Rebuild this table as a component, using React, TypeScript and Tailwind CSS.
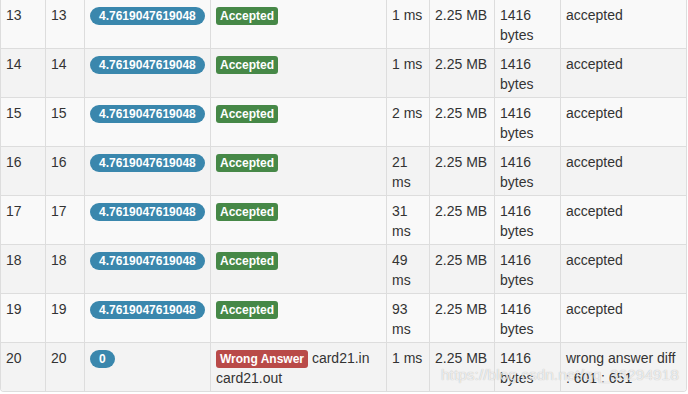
const rows = [
  { n: 13, time: "1 ms" },
  { n: 14, time: "1 ms" },
  { n: 15, time: "2 ms" },
  { n: 16, time: "21 ms" },
  { n: 17, time: "31 ms" },
  { n: 18, time: "49 ms" },
  { n: 19, time: "93 ms" },
]

function Cell({ w, children }: { w: string; children: React.ReactNode }) {
  return <div className={`${w} shrink-0 border-r border-[#dddddd] px-[5px] pt-[5px] pb-[3px]`}>{children}</div>
}

function Badge({ children }: { children: React.ReactNode }) {
  return (
    <span className="inline-block rounded-full bg-[#3a87ad] px-[9px] py-[2px] text-[12px] font-bold leading-[14px] text-white">
      {children}
    </span>
  )
}

function Label({ color, children }: { color: string; children: React.ReactNode }) {
  return (
    <span className={`inline-block rounded-[3px] ${color} px-[4px] py-[2px] text-[12px] font-bold leading-[14px] text-white`}>
      {children}
    </span>
  )
}

function Row({
  n,
  score,
  status,
  time,
  message,
  last,
  shade,
}: {
  n: number
  score: string
  status: React.ReactNode
  time: string
  message: string
  last?: boolean
  shade: string
}) {
  return (
    <div className={`flex ${last ? "h-[48px]" : "h-[49px] border-b border-[#dddddd]"} ${shade}`}>
      <Cell w="w-[45px]">{n}</Cell>
      <Cell w="w-[39px]">{n}</Cell>
      <Cell w="w-[126px]">
        <Badge>{score}</Badge>
      </Cell>
      <Cell w="w-[176px]">{status}</Cell>
      <Cell w="w-[43px]">{time}</Cell>
      <Cell w="w-[65px]">2.25 MB</Cell>
      <Cell w="w-[66px]">1416 bytes</Cell>
      <Cell w="w-[126px]">{message}</Cell>
    </div>
  )
}

export default function App() {
  return (
    <div className="h-[394px] w-[688px] bg-white font-['Liberation_Sans',Arial,sans-serif] text-[14px] leading-[20px] text-[#333333]">
      <div className="relative w-[687px] overflow-hidden rounded-b-[4px] border-x border-b border-[#dddddd]">
        {rows.map((r, i) => (
          <Row
            key={r.n}
            n={r.n}
            score="4.7619047619048"
            status={<Label color="bg-[#468847]">Accepted</Label>}
            time={r.time}
            message="accepted"
            shade={i % 2 === 0 ? "bg-[#f9f9f9]" : "bg-[#f3f3f3]"}
          />
        ))}
        <Row
          n={20}
          score="0"
          status={
            <>
              <Label color="bg-[#b94a48]">Wrong Answer</Label> card21.in card21.out
            </>
          }
          time="1 ms"
          message="wrong answer diff : 601 : 651"
          shade="bg-[#f3f3f3]"
          last
        />
        {/* csdn watermark */}
        <div className="pointer-events-none absolute left-[440px] top-[365px] whitespace-nowrap text-[15.5px] leading-[20px] text-white/75 [text-shadow:0_0_1px_rgba(0,0,0,0.3)]">
          https://blog.csdn.net/qq_36294918
        </div>
      </div>
    </div>
  )
}
